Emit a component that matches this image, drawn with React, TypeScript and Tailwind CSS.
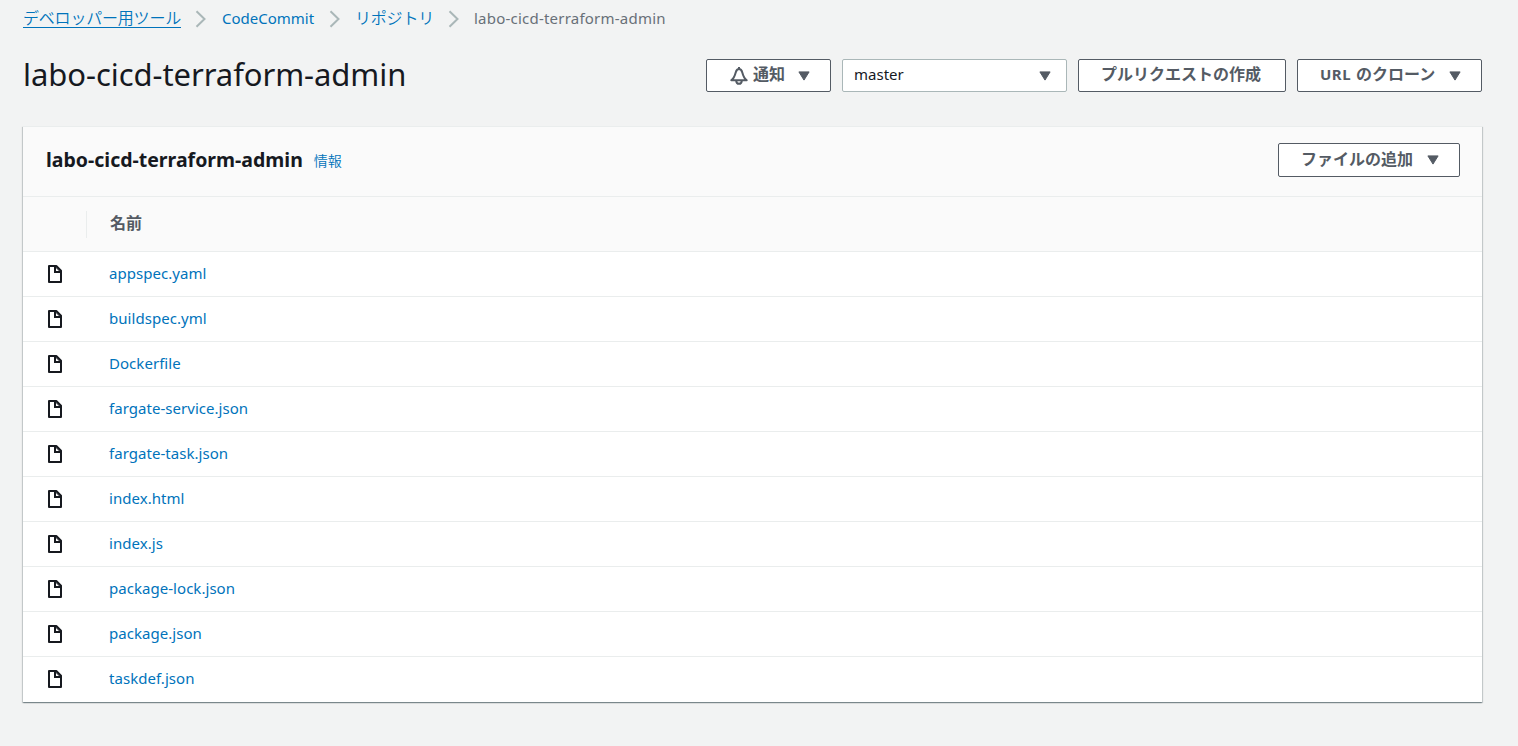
import type { ReactNode } from "react";

const files = [
  "appspec.yaml",
  "buildspec.yml",
  "Dockerfile",
  "fargate-service.json",
  "fargate-task.json",
  "index.html",
  "index.js",
  "package-lock.json",
  "package.json",
  "taskdef.json",
];

function Separator() {
  return (
    <svg className="mt-0.5 h-[18px] w-3 shrink-0 text-[#aab7b8]" viewBox="0 0 12 18" fill="none" stroke="currentColor" strokeWidth="2">
      <path d="M1.5 1.2 9.5 9l-8 7.8" />
    </svg>
  );
}

function Caret() {
  return (
    <svg className="h-[10px] w-3 shrink-0" viewBox="0 0 12 10" fill="#545b64" stroke="#545b64" strokeWidth="1" strokeLinejoin="round">
      <path d="M.9 .9h10.2L6 9.1z" />
    </svg>
  );
}

function FileIcon() {
  return (
    <svg className="h-[18px] w-[14px]" viewBox="0 0 14 18" fill="none" stroke="#16191f" strokeWidth="2" strokeLinejoin="round">
      <path d="M1 1h7.3L13 5.7V17H1z" />
      <path d="M7 1v6h6" strokeLinejoin="miter" />
      <path d="M7 1.500 12.500 7" strokeWidth="1" />
    </svg>
  );
}

function BellIcon() {
  return (
    <svg className="mt-px h-[18px] w-[18px] shrink-0" viewBox="0 0 18 18" fill="none" stroke="#545b64" strokeWidth="2" strokeLinejoin="round">
      <path d="M9 2C7.100 2 6.200 3.600 5.700 5.400 4.900 8.600 4.200 11 1.300 13.200h15.400C13.800 11 13.100 8.600 12.300 5.400 11.800 3.600 10.900 2 9 2z" />
      <path d="M6.200 13.600c.1 2 1.200 3.200 2.800 3.200s2.700-1.200 2.800-3.200" />
      <path d="M9 0v2" />
    </svg>
  );
}

function Button({ className, children }: { className: string; children: ReactNode }) {
  return (
    <button className={`flex shrink-0 items-center rounded-[2px] border border-[#545b64] bg-white text-base font-bold leading-5 text-[#545b64] ${className}`}>
      {children}
    </button>
  );
}

export default function App() {
  return (
    <div className="h-[746px] w-[1518px] overflow-hidden bg-[#f2f3f3] pl-[23px] pr-9 font-['Noto_Sans','Noto_Sans_CJK_JP',sans-serif] text-[15px] text-[#16191f]">
      <nav className="flex h-9 items-center whitespace-nowrap leading-5 text-[#0073bb]">
        <a className="w-[172px] text-base font-[350] tracking-[-0.2px]">
          <span className="block h-[19px] w-[158px] border-b border-[#0073bb] leading-[19px]">デベロッパー用ツール</span>
        </a>
        <Separator />
        <a className="ml-[15px] w-[107px]">CodeCommit</a>
        <Separator />
        <a className="ml-[14px] w-[93px] text-base font-[350] tracking-[-0.2px]">リポジトリ</a>
        <Separator />
        <span className="ml-[14px] tracking-[0.22px] text-[#687078]">labo-cicd-terraform-admin</span>
      </nav>

      <header className="mt-[23px] flex h-[33px] items-center justify-between">
        <h1 className="-mt-0.5 whitespace-nowrap text-[31px] leading-[33px] tracking-[-0.06px]">labo-cicd-terraform-admin</h1>
        <div className="flex h-[33px] gap-[11px]">
          <Button className="w-[125px] pl-[23px]">
            <BellIcon />
            <span className="-mt-1 ml-[5px] mr-[13px]">通知</span>
            <Caret />
          </Button>
          <div className="flex w-[225px] items-center justify-between rounded-[2px] border border-[#aab7b8] bg-white pl-[11px] pr-[15px]">
            <span className="-mt-1 leading-5">master</span>
            <Caret />
          </div>
          <Button className="w-[208px] pl-[22px]">
            <span className="-mt-1">プルリクエストの作成</span>
          </Button>
          <Button className="w-[185px] pl-[22px]">
            <span className="-mt-1 mr-[14px] flex w-[115px] items-baseline gap-[5px] whitespace-nowrap">
              <span className="text-[15px] tracking-[0.5px]">URL</span>
              <span>のクローン</span>
            </span>
            <Caret />
          </Button>
        </div>
      </header>

      <section className="mt-[34px] border-t border-[#eaeded] bg-white shadow-[0_1px_1px_0_rgba(0,28,36,0.3),1px_1px_1px_0_rgba(0,28,36,0.15),-1px_1px_1px_0_rgba(0,28,36,0.15)]">
        <div className="flex h-[70px] items-start justify-between border-b border-[#eaeded] bg-[#fafafa] pl-[23px] pr-[22px] pt-4">
          <div className="flex items-start pt-[5px]">
            <h2 className="text-[19.5px] font-bold leading-6">labo-cicd-terraform-admin</h2>
            <a className="ml-[11px] mt-[3px] text-sm font-[350] leading-5 text-[#0073bb]">情報</a>
          </div>
          <Button className="h-[34px] w-[182px] pl-[22px]">
            <span className="-mt-0.5 mr-[14px]">ファイルの追加</span>
            <Caret />
          </Button>
        </div>
        <div className="flex h-[55px] items-center border-b border-[#eaeded] bg-[#fafafa]">
          <div className="h-[27px] w-16 border-r border-[#eaeded]" />
          <div className="-mt-0.5 ml-[23px] text-base font-bold leading-5 text-[#545b64]">名前</div>
        </div>
        <ul>
          {files.map((name) => (
            <li key={name} className="flex h-[45px] items-center border-b border-[#eaeded] pl-[25px] last:border-b-transparent">
              <FileIcon />
              <a className="-mt-0.5 ml-[47px] leading-5 tracking-[0.04px] text-[#0073bb]">{name}</a>
            </li>
          ))}
        </ul>
      </section>
    </div>
  );
}
